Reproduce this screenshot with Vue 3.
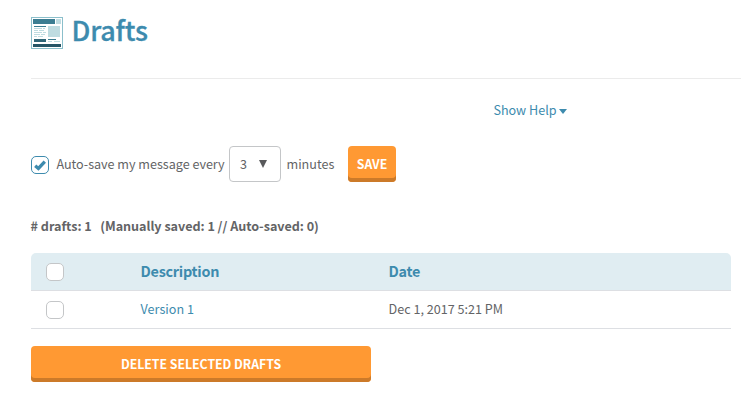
<template>
  <div class="page">
    <header class="page-header">
      <svg class="page-icon" width="32" height="32" viewBox="0 0 32 32" shape-rendering="crispEdges">
        <rect x="0.5" y="0.5" width="31" height="31" fill="#fff" stroke="#8bbfcb" />
        <path fill="#3c7d92" d="M2 2h22v5H2zM3 9h12v1H3zM17 22h8v1h-8z" />
        <path fill="#bfdce1" d="M25 2h5v5h-5zM17 9h12v11H17zM3 11h8v1H3zM12 11h2v1h-2zM3 13h4v1H3zM8 13h5v1H8zM3 15h8v1H3zM12 15h3v1h-3zM3 17h6v1H3zM10 17h4v1h-4zM3 19h3v1H3zM7 19h5v1H7zM17 24h4v1h-4zM23 24h6v1h-6z" />
        <path fill="#2f6577" d="M3 22h12v3H3z" />
        <path fill="#255566" d="M2 27h28v3H2z" />
      </svg>
      <h1>Drafts</h1>
    </header>

    <div class="help">
      <a href="#" @click.prevent>Show Help</a>
      <svg width="8" height="5" viewBox="0 0 8 5"><path d="M0 0h8L4 5z" fill="#3d8bae" /></svg>
    </div>

    <div class="autosave">
      <button class="checkbox" :class="{ checked: autoSave }" aria-label="Auto-save" @click="autoSave = !autoSave">
        <svg v-if="autoSave" width="12" height="11" viewBox="0 0 12 11">
          <path d="M1.2 5.7 4.4 8.4 10.8 1.6" fill="none" stroke="#3d8bae" stroke-width="3.3" />
        </svg>
      </button>
      <span class="autosave-label">Auto-save my message every</span>
      <button class="select">
        <span>{{ minutes }}</span>
        <svg width="8" height="8" viewBox="0 0 8 8"><path d="M0 0h8L4 8z" fill="#58595b" /></svg>
      </button>
      <span class="minutes">minutes</span>
      <button class="btn btn-save">SAVE</button>
    </div>

    <p class="summary"><span class="count"># drafts: {{ drafts.length }}</span><span class="details">(Manually saved: 1 // Auto-saved: 0)</span></p>

    <div class="table">
      <div class="row head">
        <div class="cell-check">
          <button class="checkbox" aria-label="Select all"></button>
        </div>
        <div class="cell-desc">Description</div>
        <div class="cell-date">Date</div>
      </div>
      <div v-for="draft in drafts" :key="draft.id" class="row">
        <div class="cell-check">
          <button class="checkbox" aria-label="Select draft"></button>
        </div>
        <div class="cell-desc"><a href="#" @click.prevent>{{ draft.description }}</a></div>
        <div class="cell-date">{{ draft.date }}</div>
      </div>
    </div>

    <button class="btn btn-delete">DELETE SELECTED DRAFTS</button>
  </div>
</template>

<script setup>
import { ref } from 'vue';

const autoSave = ref(true);
const minutes = ref(3);
const drafts = ref([
  { id: 1, description: 'Version 1', date: 'Dec 1, 2017 5:21 PM' }
]);
</script>

<style>
body {
  margin: 0;
  background: #fff;
}
</style>

<style scoped>
.page {
  box-sizing: border-box;
  height: 400px;
  padding-left: 31px;
  overflow: hidden;
  font-family: "Noto Sans CJK SC", "Noto Sans", sans-serif;
  font-size: 12.6px;
  line-height: 18px;
  color: #636466;
}

button {
  box-sizing: border-box;
  margin: 0;
  padding: 0;
  font: inherit;
  color: inherit;
  cursor: pointer;
}

a {
  color: #3d8bae;
  text-decoration: none;
}

.page-header {
  display: flex;
  box-sizing: border-box;
  height: 79px;
  padding-top: 17px;
  border-bottom: 1px solid #ebebeb;
}

.page-header h1 {
  margin: -3px 0 0 8.5px;
  font-size: 27px;
  line-height: 32px;
  font-weight: 500;
  letter-spacing: -0.2px;
  color: #3d8bae;
  -webkit-text-stroke: 0.3px #3d8bae;
}

.help {
  display: flex;
  align-items: center;
  height: 18px;
  margin: 22px 0 0 462px;
}

.help a {
  padding-left: 0.4px;
}

.help svg {
  margin: 3px 0 0 2px;
}

.autosave {
  display: flex;
  align-items: center;
  height: 36px;
  margin-top: 27px;
}

.checkbox {
  display: flex;
  align-items: center;
  justify-content: center;
  flex-shrink: 0;
  width: 18px;
  height: 18px;
  border: 1px solid #c4c6c8;
  border-radius: 5px;
  background: #fff;
}

.checkbox.checked {
  margin-top: 2px;
  border-color: #3d8bae;
}

.autosave-label {
  width: 172.6px;
  margin-left: 7.4px;
  letter-spacing: -0.02px;
  white-space: nowrap;
}

.select {
  display: flex;
  align-items: center;
  width: 52px;
  height: 36px;
  padding-left: 10px;
  border: 1px solid #c4c6c8;
  border-radius: 4px;
  background: #fff;
}

.select svg {
  margin-left: 12px;
}

.minutes {
  width: 61.5px;
  margin-left: 5.5px;
}

.btn {
  height: 36px;
  border: 0;
  border-radius: 4px;
  background: #ff9933;
  box-shadow: inset 0 -4px 0 #cc7a29;
  font-size: 12.3px;
  font-weight: 700;
  color: #fff;
}

.btn-save {
  width: 48px;
}

.summary {
  margin: 35px 0 0 -0.4px;
  font-weight: 700;
  letter-spacing: -0.03px;
  white-space: nowrap;
}

.details {
  margin-left: 8.5px;
}

.table {
  width: 700px;
  margin-top: 18px;
}

.row {
  display: flex;
  align-items: center;
  box-sizing: border-box;
  height: 38px;
  border-bottom: 1px solid #dddfe3;
}

.head {
  border-radius: 5px 5px 0 0;
  background: #e0edf2;
  font-size: 14.4px;
  font-weight: 700;
  letter-spacing: -0.27px;
  color: #3d8bae;
}

.cell-check {
  width: 94.6px;
  padding-left: 15px;
}

.cell-desc {
  width: 248px;
}

.cell-desc,
.cell-date {
  padding-bottom: 2px;
}

.btn-delete {
  display: block;
  width: 340px;
  margin-top: 17px;
  letter-spacing: -0.03px;
}
</style>
